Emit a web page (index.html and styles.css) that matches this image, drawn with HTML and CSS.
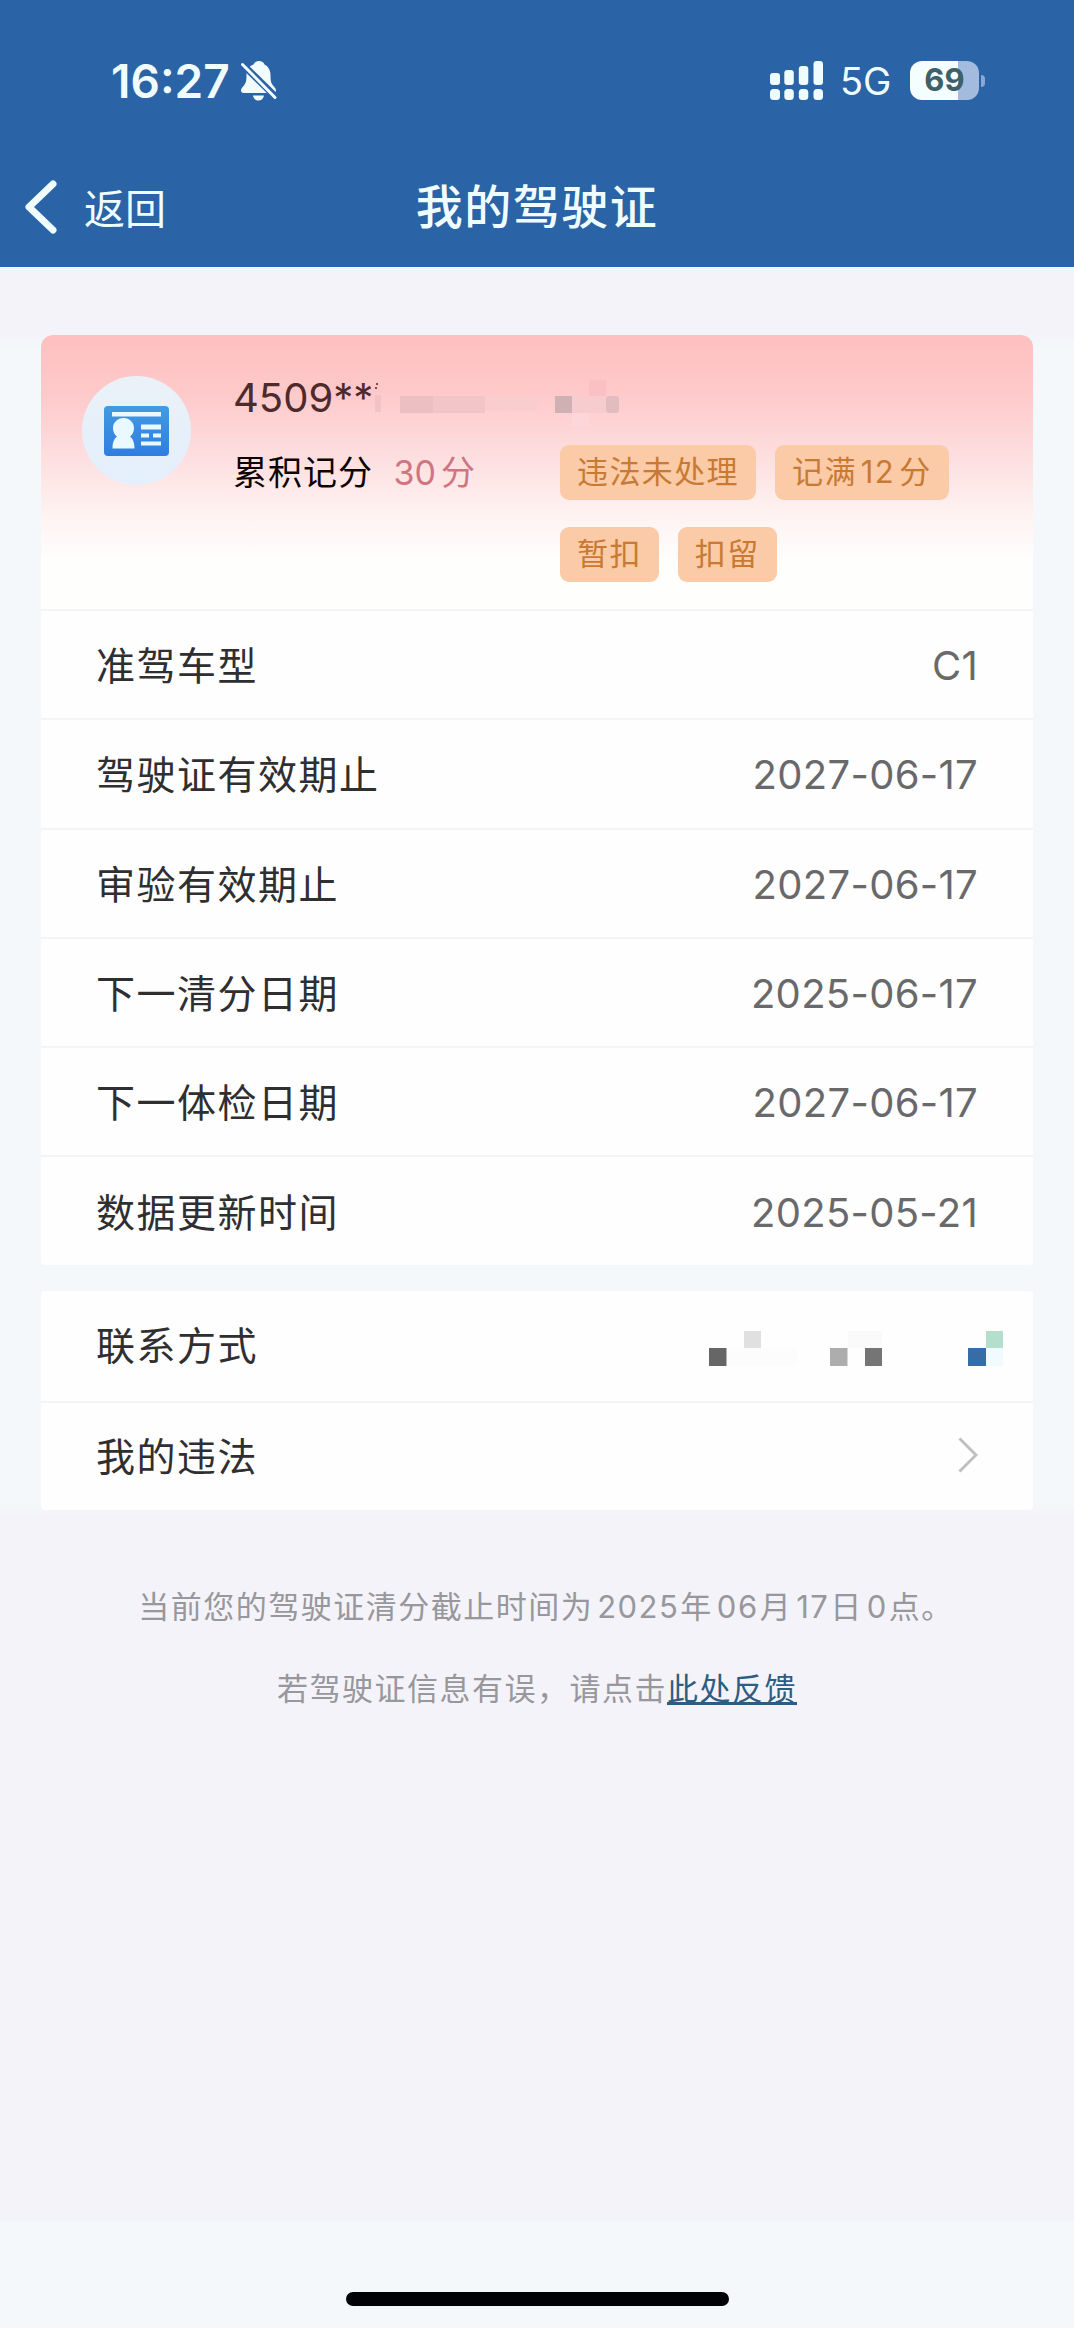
FILE: index.html
```html
<!DOCTYPE html>
<html lang="zh-CN">
<head>
    <meta charset="UTF-8">
    <meta name="viewport" content="width=device-width, initial-scale=1.0">
    <title>我的驾驶证</title>
    <link rel="stylesheet" href="styles.css">
</head>
<body>
    <header class="header">
        <div class="status-bar">
            <div class="status-left">
                <span class="time">16:27</span>
                <svg class="bell" width="36" height="40" viewBox="0 0 36 40">
                    <path d="M18 0c-3 0-4.700 1.500-5.500 3.500C8 5 5.500 9 5.500 14c0 6-.5 8-3 11-1.500 1.500-2.500 3-2.500 4.500 0 1.500 1 2.500 2.500 2.500h30c1.500 0 2.500-1 2.500-2.500 0-1.500-1-3-2.500-4.500-2.500-3-3-5-3-11 0-5-2.500-9-6-10.500C22.700 1.500 21 0 18 0zM12 34.500h11c-.5 3-2.500 5-5.500 5s-5-2-5.500-5z" fill="#f2fcff"/>
                    <path d="M-1 1L37 38" stroke="#2a63a6" stroke-width="7"/>
                    <path d="M1.500 3.500L34 36.500" stroke="#f2fcff" stroke-width="3" stroke-linecap="round"/>
                </svg>
            </div>
            <div class="status-right">
                <svg class="signal" width="53" height="39" viewBox="0 0 53 39" fill="#eefbff">
                    <rect x="0" y="12" width="10" height="12" rx="3"/>
                    <rect x="14.300" y="9" width="9.500" height="15" rx="3"/>
                    <rect x="28.800" y="5" width="9.500" height="19" rx="3"/>
                    <rect x="43.500" y="0" width="9.500" height="24" rx="3"/>
                    <rect x="0" y="28" width="10" height="11" rx="3.500"/>
                    <rect x="14.300" y="28" width="9.500" height="11" rx="3.500"/>
                    <rect x="28.800" y="28" width="9.500" height="11" rx="3.500"/>
                    <rect x="43.500" y="28" width="9.500" height="11" rx="3.500"/>
                </svg>
                <span class="network">5G</span>
                <div class="battery">69</div>
                <i class="battery-cap"></i>
            </div>
        </div>
        <nav class="nav">
            <a class="back">
                <svg width="32" height="54" viewBox="0 0 32 54">
                    <path d="M28 4L4 27L28 50" fill="none" stroke="#f0fdff" stroke-width="7" stroke-linecap="round" stroke-linejoin="round"/>
                </svg>
                <span>返回</span>
            </a>
            <h1 class="title">我的驾驶证</h1>
        </nav>
    </header>

    <main class="main">
        <section class="card">
            <div class="profile">
                <div class="avatar">
                    <svg width="65" height="50" viewBox="0 0 65 50">
                        <defs>
                            <linearGradient id="blue" x1="0" y1="0" x2="0" y2="1">
                                <stop offset="0" stop-color="#429bdf"/>
                                <stop offset="1" stop-color="#2f7de2"/>
                            </linearGradient>
                        </defs>
                        <rect width="65" height="50" rx="4" fill="url(#blue)"/>
                        <g fill="#e9f9ff">
                            <rect x="8" y="6" width="49" height="4.500"/>
                            <rect x="37" y="18.500" width="20" height="5"/>
                            <rect x="37" y="27.500" width="8" height="4"/>
                            <rect x="49" y="27.500" width="8" height="4"/>
                            <rect x="37" y="35.500" width="20" height="4"/>
                            <path d="M19.500 12c-6 0-10.500 4.500-10.500 10 0 4 1.500 6.500 4 8.500-3 2.500-4.500 6-4.500 12h22c0-6-1.500-9.500-4.500-12 2.500-2 4-4.500 4-8.500 0-5.500-4.500-10-10.500-10z"/>
                        </g>
                    </svg>
                </div>
                <div class="profile-info">
                    <div class="number">
                        <span>4509**</span>
                        <svg class="mask" width="250" height="50" viewBox="0 0 250 50">
                            <path d="M1 5h2v2h-2zM0 9h2v2h-2z" fill="#7d4b50"/>
                            <rect x="0" y="17" width="6" height="17" fill="#f2c3c6"/>
                            <rect x="25" y="18" width="33" height="17" fill="#ecbfc2"/>
                            <rect x="58" y="18" width="52" height="17" fill="#f2c6c9"/>
                            <rect x="110" y="18" width="52" height="14" fill="#f9ccce"/>
                            <rect x="180" y="18" width="17" height="17" fill="#cfb0b3"/>
                            <rect x="197" y="18" width="34" height="17" fill="#f7cccf"/>
                            <rect x="214" y="2" width="17" height="16" fill="#fbc0c4"/>
                            <rect x="231" y="18" width="13" height="17" rx="3" fill="#e3bcc0"/>
                            <rect x="197" y="35" width="17" height="14" fill="#fcd6d8"/>
                        </svg>
                    </div>
                    <div class="score-row">
                        <div class="score">累积记分 <em>30<i>分</i></em></div>
                        <div class="tags">
                            <span class="tag">违法未处理</span>
                            <span class="tag">记满<b>12</b>分</span>
                            <span class="tag">暂扣</span>
                            <span class="tag">扣留</span>
                        </div>
                    </div>
                </div>
            </div>
            <div class="row"><span class="label">准驾车型</span><span class="value">C1</span></div>
            <div class="row"><span class="label">驾驶证有效期止</span><span class="value">2027-06-17</span></div>
            <div class="row"><span class="label">审验有效期止</span><span class="value">2027-06-17</span></div>
            <div class="row"><span class="label">下一清分日期</span><span class="value">2025-06-17</span></div>
            <div class="row"><span class="label">下一体检日期</span><span class="value">2027-06-17</span></div>
            <div class="row"><span class="label">数据更新时间</span><span class="value">2025-05-21</span></div>
        </section>

        <section class="card card-links">
            <div class="row">
                <span class="label">联系方式</span>
                <svg class="phone-mask" width="296" height="36" viewBox="0 0 296 36">
                    <rect x="35" y="0" width="17" height="17" fill="#e0e0e0"/>
                    <rect x="0" y="17" width="17.500" height="18" fill="#666"/>
                    <rect x="18" y="17" width="70" height="18" fill="#fcfcfc"/>
                    <rect x="121" y="17" width="17.500" height="18" fill="#adadad"/>
                    <rect x="139" y="0" width="34" height="17" fill="#fafafa"/>
                    <rect x="156" y="17" width="17" height="18" fill="#757575"/>
                    <rect x="259" y="17" width="18" height="18" fill="#376da6"/>
                    <rect x="277" y="0" width="17" height="17" fill="#b4dfce"/>
                    <rect x="277" y="17" width="17" height="18" fill="#f0faff"/>
                </svg>
            </div>
            <div class="row">
                <span class="label">我的违法</span>
                <svg class="arrow" width="20" height="36" viewBox="0 0 20 36">
                    <path d="M1.500 1.500L18 18L1.500 34.500" fill="none" stroke="#c0c0c2" stroke-width="3"/>
                </svg>
            </div>
        </section>

        <div class="notice">
            <p class="notice-date">当前您的驾驶证清分截止时间为<b>2025</b>年<b>06</b>月<b>17</b>日<b>0</b>点。</p>
            <p>若驾驶证信息有误，请点击<a class="link">此处反馈</a></p>
        </div>
    </main>

    <footer class="footer">
        <div class="home-bar"></div>
    </footer>
</body>
</html>
```

FILE: styles.css
```css
* {
    box-sizing: border-box;
}

body {
    display: flex;
    flex-direction: column;
    height: 2328px;
    margin: 0;
    background-color: #f4f3f9;
    font-family: Inter, 'Noto Sans CJK SC', sans-serif;
    color: #2f2f31;
}

i, em, b {
    font-style: normal;
    font-weight: inherit;
}

svg {
    display: block;
    flex: none;
}

.header {
    height: 267px;
    background-color: #2a63a6;
    color: #f0fdff;
}

.status-bar {
    display: flex;
    justify-content: space-between;
    height: 161px;
    padding: 0 89px 0 111px;
}

.status-left, .status-right {
    display: flex;
    align-items: center;
}

.time {
    width: 130px;
    font-size: 46px;
    font-weight: 600;
    white-space: nowrap;
}

.network {
    width: 70px;
    margin-left: 17px;
    font-size: 38px;
}

.battery {
    width: 69px;
    height: 39px;
    border-radius: 12px;
    background: linear-gradient(90deg, #f4fdff 70%, #a3bcdd 70%);
    color: #3f6068;
    font-size: 31px;
    font-weight: 700;
    line-height: 37px;
    text-align: center;
}

.battery-cap {
    width: 4px;
    height: 12px;
    margin-left: 2px;
    border-radius: 0 4px 4px 0;
    background-color: #87a9d5;
}

.nav {
    display: grid;
    grid-template-columns: 1fr auto 1fr;
    align-items: center;
    height: 92px;
    padding: 0 24px;
}

.back {
    display: flex;
    align-items: center;
    gap: 27px;
    font-size: 41px;
}

.back svg {
    margin-left: 1px;
}

.back span {
    margin-top: -3px;
}

.title {
    margin: -8px 0 0;
    font-size: 47px;
    font-weight: 500;
    letter-spacing: 1.5px;
}

.main {
    flex: 1;
    padding: 68px 41px 0;
    background: linear-gradient(#f4f3f9 68px, #f4f8fa 80px, #f4f8fa 1235px, #f4f3f9 1250px);
}

.card {
    overflow: hidden;
    border-radius: 12px 12px 4px 4px;
    background-color: #fefefe;
}

.profile {
    display: flex;
    height: 274px;
    padding: 41px 0 0 41px;
    background: linear-gradient(#fec0c0, #fec8c9 20%, #fddcdd 42%, #fef3f2 66%, #fefefd 82%);
}

.avatar {
    display: flex;
    align-items: center;
    justify-content: center;
    width: 109px;
    height: 109px;
    border-radius: 50%;
    background: linear-gradient(#eaf1f8, #e3effb);
}

.profile-info {
    margin-left: 42px;
}

.number {
    display: flex;
    height: 69px;
    color: #4d2a2c;
    font-size: 40px;
    line-height: 44px;
}

.number span {
    width: 142px;
    white-space: nowrap;
}

.mask {
    margin-top: 2px;
}

.score-row {
    display: flex;
}

.score {
    width: 327px;
    color: #0c0506;
    font-size: 34px;
    line-height: 56px;
    letter-spacing: 1px;
    white-space: nowrap;
}

.score em {
    margin-left: 10px;
    color: #cd7580;
    letter-spacing: 0;
}

.score i {
    margin-left: 5px;
}

.tags {
    display: flex;
    flex-wrap: wrap;
    gap: 27px 19px;
    width: 430px;
}

.tag {
    height: 55px;
    padding: 0 17px;
    border-radius: 9px;
    background-color: #fbcaa7;
    color: #c87a33;
    font-size: 31px;
    line-height: 54px;
    letter-spacing: 1.4px;
}

.tag b {
    margin: 0 4px;
}

.row {
    display: flex;
    align-items: center;
    justify-content: space-between;
    height: 109.3px;
    padding: 0 55px;
    border-top: 2px solid #f3f4f5;
}

.label {
    margin-top: -3px;
    font-size: 39px;
    letter-spacing: 1.5px;
}

.value {
    margin-top: 2px;
    color: #69696b;
    font-size: 40px;
    letter-spacing: .3px;
}

.card-links {
    margin-top: 26px;
    border-radius: 4px;
}

.card-links .row:first-child {
    height: 110px;
    border-top: none;
}

.card-links .label {
    margin-top: -5px;
}

.phone-mask {
    margin: 6px -27px 0 0;
}

.arrow {
    margin-top: -3px;
}

.notice {
    margin-top: 71px;
    color: #97979c;
    font-size: 31px;
    line-height: 52px;
    letter-spacing: 1.5px;
    text-align: center;
}

.notice p {
    margin: 0 0 30px;
}

.notice .notice-date {
    padding-left: 18px;
}

.notice b {
    margin: 0 1px 0 4px;
}

.link {
    color: #2d5d83;
    text-decoration: underline;
}

.footer {
    display: flex;
    justify-content: center;
    height: 106px;
    padding-top: 70px;
    background-color: #f4f8fb;
}

.home-bar {
    width: 383px;
    height: 14px;
    border-radius: 7px;
    background-color: #000205;
}
```
